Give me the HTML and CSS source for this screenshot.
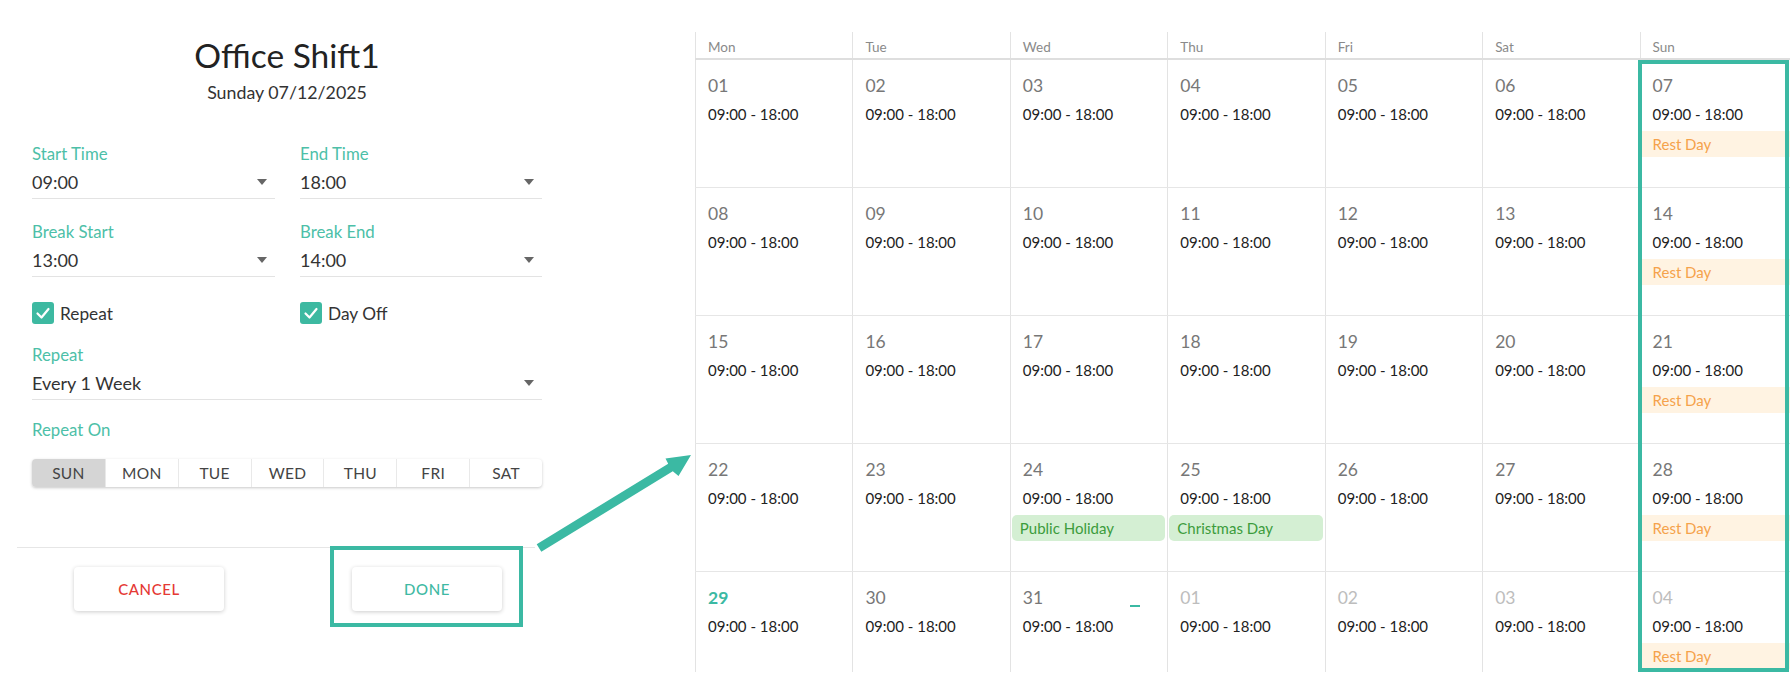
FILE: index.html
```html
<!DOCTYPE html>
<html>
<head>
<meta charset="utf-8">
<link rel="stylesheet" href="styles.css">
</head>
<body>
<div class="dialog">
  <h1 class="title">Office Shift1</h1>
  <div class="subtitle">Sunday 07/12/2025</div>

  <div class="fields">
    <div class="field">
      <div class="label">Start Time</div>
      <div class="value"><span>09:00</span><span class="caret"></span></div>
    </div>
    <div class="field">
      <div class="label">End Time</div>
      <div class="value"><span>18:00</span><span class="caret"></span></div>
    </div>
    <div class="field">
      <div class="label">Break Start</div>
      <div class="value"><span>13:00</span><span class="caret"></span></div>
    </div>
    <div class="field">
      <div class="label">Break End</div>
      <div class="value"><span>14:00</span><span class="caret"></span></div>
    </div>
  </div>

  <div class="checks">
    <div class="check-item">
      <span class="checkbox"><svg viewBox="0 0 22 22" width="22" height="22"><polyline points="5.5,11.5 9.5,15.5 16.5,7" fill="none" stroke="#fff" stroke-width="2.2" stroke-linecap="round" stroke-linejoin="round"/></svg></span>
      <span>Repeat</span>
    </div>
    <div class="check-item">
      <span class="checkbox"><svg viewBox="0 0 22 22" width="22" height="22"><polyline points="5.5,11.5 9.5,15.5 16.5,7" fill="none" stroke="#fff" stroke-width="2.2" stroke-linecap="round" stroke-linejoin="round"/></svg></span>
      <span>Day Off</span>
    </div>
  </div>

  <div class="field repeat-field">
    <div class="label">Repeat</div>
    <div class="value"><span>Every 1 Week</span><span class="caret"></span></div>
  </div>

  <div class="label repeat-on">Repeat On</div>

  <div class="days">
    <div class="day active">SUN</div>
    <div class="day">MON</div>
    <div class="day">TUE</div>
    <div class="day">WED</div>
    <div class="day">THU</div>
    <div class="day">FRI</div>
    <div class="day">SAT</div>
  </div>

  <div class="separator"></div>

  <div class="actions">
    <button class="btn cancel">CANCEL</button>
    <div class="done-wrap">
      <button class="btn done">DONE</button>
      <div class="highlight"></div>
    </div>
  </div>
</div>

<svg class="arrow" viewBox="520 440 190 120" width="190" height="120">
  <polygon points="541.3,551.8 536.7,544.2 668.2,463.7 665.5,458.5 691,455 678.5,476 672.8,471.3" fill="#3bb9a3"/>
</svg>

<div class="calendar">
  <div class="cal-head">
    <div class="head-cell">Mon</div>
    <div class="head-cell">Tue</div>
    <div class="head-cell">Wed</div>
    <div class="head-cell">Thu</div>
    <div class="head-cell">Fri</div>
    <div class="head-cell">Sat</div>
    <div class="head-cell">Sun</div>
  </div>

  <div class="cal-row">
    <div class="cell"><div class="date">01</div><div class="time">09:00 - 18:00</div></div>
    <div class="cell"><div class="date">02</div><div class="time">09:00 - 18:00</div></div>
    <div class="cell"><div class="date">03</div><div class="time">09:00 - 18:00</div></div>
    <div class="cell"><div class="date">04</div><div class="time">09:00 - 18:00</div></div>
    <div class="cell"><div class="date">05</div><div class="time">09:00 - 18:00</div></div>
    <div class="cell"><div class="date">06</div><div class="time">09:00 - 18:00</div></div>
    <div class="cell"><div class="date">07</div><div class="time">09:00 - 18:00</div><div class="tag rest">Rest Day</div></div>
  </div>

  <div class="cal-row">
    <div class="cell"><div class="date">08</div><div class="time">09:00 - 18:00</div></div>
    <div class="cell"><div class="date">09</div><div class="time">09:00 - 18:00</div></div>
    <div class="cell"><div class="date">10</div><div class="time">09:00 - 18:00</div></div>
    <div class="cell"><div class="date">11</div><div class="time">09:00 - 18:00</div></div>
    <div class="cell"><div class="date">12</div><div class="time">09:00 - 18:00</div></div>
    <div class="cell"><div class="date">13</div><div class="time">09:00 - 18:00</div></div>
    <div class="cell"><div class="date">14</div><div class="time">09:00 - 18:00</div><div class="tag rest">Rest Day</div></div>
  </div>

  <div class="cal-row">
    <div class="cell"><div class="date">15</div><div class="time">09:00 - 18:00</div></div>
    <div class="cell"><div class="date">16</div><div class="time">09:00 - 18:00</div></div>
    <div class="cell"><div class="date">17</div><div class="time">09:00 - 18:00</div></div>
    <div class="cell"><div class="date">18</div><div class="time">09:00 - 18:00</div></div>
    <div class="cell"><div class="date">19</div><div class="time">09:00 - 18:00</div></div>
    <div class="cell"><div class="date">20</div><div class="time">09:00 - 18:00</div></div>
    <div class="cell"><div class="date">21</div><div class="time">09:00 - 18:00</div><div class="tag rest">Rest Day</div></div>
  </div>

  <div class="cal-row">
    <div class="cell"><div class="date">22</div><div class="time">09:00 - 18:00</div></div>
    <div class="cell"><div class="date">23</div><div class="time">09:00 - 18:00</div></div>
    <div class="cell"><div class="date">24</div><div class="time">09:00 - 18:00</div><div class="tag holiday">Public Holiday</div></div>
    <div class="cell"><div class="date">25</div><div class="time">09:00 - 18:00</div><div class="tag holiday">Christmas Day</div></div>
    <div class="cell"><div class="date">26</div><div class="time">09:00 - 18:00</div></div>
    <div class="cell"><div class="date">27</div><div class="time">09:00 - 18:00</div></div>
    <div class="cell"><div class="date">28</div><div class="time">09:00 - 18:00</div><div class="tag rest">Rest Day</div></div>
  </div>

  <div class="cal-row">
    <div class="cell"><div class="date today">29</div><div class="time">09:00 - 18:00</div></div>
    <div class="cell"><div class="date">30</div><div class="time">09:00 - 18:00</div></div>
    <div class="cell"><div class="date">31</div><div class="time">09:00 - 18:00</div><span class="dash"></span></div>
    <div class="cell"><div class="date other">01</div><div class="time">09:00 - 18:00</div></div>
    <div class="cell"><div class="date other">02</div><div class="time">09:00 - 18:00</div></div>
    <div class="cell"><div class="date other">03</div><div class="time">09:00 - 18:00</div></div>
    <div class="cell"><div class="date other">04</div><div class="time">09:00 - 18:00</div><div class="tag rest">Rest Day</div></div>
  </div>

  <div class="sun-highlight"></div>
</div>
</body>
</html>
```

FILE: styles.css
```css
* { box-sizing: border-box; }

body {
  margin: 0;
  width: 1790px;
  height: 690px;
  overflow: hidden;
  position: relative;
  display: flex;
  align-items: flex-start;
  background: #fff;
  font-family: Lato, "Noto Sans", sans-serif;
  color: #333;
}

/* ---------- Dialog ---------- */
.dialog {
  flex: none;
  width: 695px;
  padding: 35px 0 0 32px;
}
.dialog > * { width: 510px; }

.title {
  margin: 0;
  font-size: 33.5px;
  line-height: 40px;
  font-weight: 400;
  text-align: center;
  color: #222;
}
.subtitle {
  margin-top: 6px;
  font-size: 17.8px;
  line-height: 22px;
  text-align: center;
  color: #333;
}

.fields {
  margin-top: 41px;
  display: grid;
  grid-template-columns: 243px 242px;
  column-gap: 25px;
  row-gap: 23px;
}
.label {
  font-size: 16.8px;
  line-height: 20px;
  color: #4dbfa8;
}
.value {
  margin-top: 5px;
  height: 30px;
  padding-bottom: 3px;
  display: flex;
  align-items: center;
  justify-content: space-between;
  font-size: 18px;
  color: #333;
  border-bottom: 1px solid #e3e3e3;
}
.caret {
  width: 0;
  height: 0;
  margin-right: 8px;
  border-left: 5.5px solid transparent;
  border-right: 5.5px solid transparent;
  border-top: 6px solid #666;
}

.checks {
  margin-top: 25px;
  display: grid;
  grid-template-columns: 243px 242px;
  column-gap: 25px;
  height: 22px;
}
.check-item {
  display: flex;
  align-items: center;
  gap: 6px;
  font-size: 17.3px;
  color: #333;
}
.checkbox {
  width: 22px;
  height: 22px;
  border-radius: 3px;
  background: #3db9a1;
  display: flex;
}

.repeat-field { margin-top: 21px; }
.repeat-on { margin-top: 20px; }

.days {
  margin-top: 19px;
  height: 28px;
  display: grid;
  grid-template-columns: repeat(7, 1fr);
  border-radius: 4px;
  overflow: hidden;
  box-shadow: 0 1px 3px rgba(0, 0, 0, 0.22);
}
.day {
  display: flex;
  align-items: center;
  justify-content: center;
  font-size: 15.5px;
  color: #444;
  letter-spacing: 0.3px;
  border-left: 1px solid #e9e9e9;
}
.day:first-child { border-left: none; }
.day.active { background: #d5d5d5; }

.separator {
  margin-top: 60px;
  margin-left: -15px;
  width: 518px !important;
  height: 1px;
  background: #e6e6e6;
}

.actions {
  margin-top: 19px;
  padding-left: 42px;
  display: flex;
  gap: 128px;
}
.btn {
  width: 150px;
  height: 44px;
  border: none;
  border-radius: 4px;
  background: #fff;
  box-shadow: 0 1px 4px rgba(0, 0, 0, 0.2);
  font-family: inherit;
  font-size: 15px;
  letter-spacing: 0.6px;
  font-weight: 500;
  cursor: pointer;
}
.cancel { color: #e53935; }
.done { color: #3fb9a3; }
.done-wrap { position: relative; }
.highlight {
  position: absolute;
  left: -22px;
  top: -21px;
  width: 193px;
  height: 81px;
  border: 4px solid #3bb9a3;
}

.arrow {
  position: absolute;
  left: 520px;
  top: 440px;
}

/* ---------- Calendar ---------- */
.calendar {
  flex: none;
  margin-top: 32px;
  width: 1102px;
  height: 640px;
  overflow: hidden;
  position: relative;
}
.cal-head {
  display: grid;
  grid-template-columns: repeat(7, 1fr);
  height: 28px;
  border-bottom: 2px solid #dedede;
}
.head-cell {
  border-left: 1px solid #e3e3e3;
  padding: 6px 0 0 12px;
  font-size: 13.5px;
  line-height: 18px;
  color: #8a8a8a;
}
.cal-row {
  display: grid;
  grid-template-columns: repeat(7, 1fr);
  height: 128px;
  border-bottom: 1px solid #e6e6e6;
}
.cell {
  position: relative;
  border-left: 1px solid #e3e3e3;
  padding: 15px 0 0 12px;
}
.date {
  font-size: 17.5px;
  line-height: 22px;
  color: #777;
}
.date.today { color: #3bb9a3; font-weight: 700; }
.date.other { color: #bdbdbd; }
.time {
  margin-top: 7px;
  font-size: 15px;
  line-height: 20px;
  color: #222;
}
.tag {
  margin-top: 7px;
  height: 26px;
  line-height: 26px;
  font-size: 15px;
}
.rest {
  margin-left: -12px;
  padding-left: 12px;
  background: #fff3e2;
  color: #f5a24b;
}
.holiday {
  margin-left: -11px;
  margin-right: 2px;
  padding-left: 8px;
  border-radius: 5px;
  background: #d4efd3;
  color: #3c9c3c;
}
.dash {
  position: absolute;
  left: 119px;
  top: 33px;
  width: 10px;
  height: 2px;
  background: #3bb9a3;
}
.sun-highlight {
  position: absolute;
  left: 943px;
  top: 28px;
  width: 151px;
  height: 612px;
  border: 4px solid #3bb9a3;
  pointer-events: none;
}
```
